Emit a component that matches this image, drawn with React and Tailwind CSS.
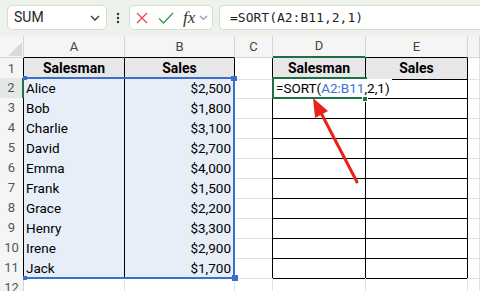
const people = [
  ["Alice", "$2,500"],
  ["Bob", "$1,800"],
  ["Charlie", "$3,100"],
  ["David", "$2,700"],
  ["Emma", "$4,000"],
  ["Frank", "$1,500"],
  ["Grace", "$2,200"],
  ["Henry", "$3,300"],
  ["Irene", "$2,900"],
  ["Jack", "$1,700"],
];

const cols = "grid grid-cols-[24px_101px_110px_38px_93px_102px_1fr]";

function Toolbar() {
  return (
    <div className="flex h-[36px] items-start bg-[#edf2ea] pt-[5px]">
      <div className="ml-[7px] flex h-[25px] w-[100px] items-center justify-between rounded-[5px] border border-[#d8dcd5] bg-white pl-[6px] pr-[6px]">
        <span className="text-[14px] text-[#1f1f1f]">SUM</span>
        <svg width="10" height="6" viewBox="0 0 10 6">
          <path d="M1 1l4 4l4-4" fill="none" stroke="#333" strokeWidth="1.3" />
        </svg>
      </div>
      <div className="flex w-[22px] justify-center pt-[7px]">
        <svg width="4" height="12" viewBox="0 0 4 12">
          <circle cx="2" cy="2" r="1.2" fill="#333" />
          <circle cx="2" cy="6" r="1.2" fill="#333" />
          <circle cx="2" cy="10" r="1.2" fill="#333" />
        </svg>
      </div>
      <div className="flex h-[25px] w-[84px] items-center rounded-[5px] border border-[#d8dcd5] bg-white pl-[6px]">
        <svg width="12" height="12" viewBox="0 0 12 12">
          <path d="M1 1l10 10M11 1L1 11" stroke="#e5484d" strokeWidth="1.3" />
        </svg>
        <svg className="ml-[10px]" width="16" height="12" viewBox="0 0 16 12">
          <path d="M1 6.5l4.5 4.5L15 1" fill="none" stroke="#2e9e49" strokeWidth="1.3" />
        </svg>
        <span className="ml-[9px] font-['Liberation_Serif',serif] text-[17px] italic leading-none text-[#333]">fx</span>
        <svg className="ml-[4px]" width="9" height="6" viewBox="0 0 9 6">
          <path d="M1 1l3.5 3.5L8 1" fill="none" stroke="#999" strokeWidth="1.2" />
        </svg>
      </div>
      <div className="ml-[6px] flex h-[25px] flex-1 items-center rounded-l-[5px] border border-r-0 border-[#d8dcd5] bg-white pl-[10px] font-['DejaVu_Sans_Mono',monospace] text-[13px] text-[#1f1f1f]">
        =SORT(A2:B11,2,1)
      </div>
    </div>
  );
}

function ColumnHeaders() {
  const base = "flex items-center justify-center border-r border-[#d4d4d4] bg-[#f5f5f5] text-[13px] text-[#444]";
  return (
    <div className={`${cols} h-[22px]`}>
      <div className="relative border-r border-b border-[#d4d4d4] bg-[#f5f5f5]">
        <svg className="absolute left-[8px] top-[6px]" width="14" height="14" viewBox="0 0 14 14">
          <path d="M14 0V14H0Z" fill="#d9d9d9" />
        </svg>
      </div>
      <div className={`${base} border-b border-b-black`}>A</div>
      <div className={`${base} border-b border-b-black`}>B</div>
      <div className={`${base} border-b border-b-[#d4d4d4]`}>C</div>
      <div className={`${base} border-b-2 border-b-[#1e7145] bg-[#e4e9e5] text-[#1e6b3e]`}>D</div>
      <div className={`${base} border-b border-b-black`}>E</div>
      <div className={`${base} border-b border-b-[#d4d4d4]`}></div>
    </div>
  );
}

function Row({ n, person }) {
  const inTable = n <= 11;
  const head = n === 1;
  const sel = n >= 2 && n <= 11;
  const rowHead =
    n === 2
      ? "border-r-2 border-r-[#1e7145] bg-[#e4e9e5]"
      : inTable
      ? "border-r border-r-black bg-[#f5f5f5]"
      : "border-r border-r-[#d4d4d4] bg-[#f5f5f5]";
  const tbl = inTable ? "border-r border-b border-black" : "border-r border-b border-[#e1e1e1]";
  const hdr = "justify-center bg-[#e7e7e7] text-[14px] font-bold";
  const selBg = sel ? "bg-[#e8eef8]" : "";
  return (
    <div className={`${cols} h-[20px] text-[13.5px] text-black`}>
      <div className={`flex items-center justify-center border-b border-b-[#d4d4d4] text-[13px] text-[#555] ${rowHead}`}>
        {n}
      </div>
      <div className={`flex items-center ${tbl} ${head ? hdr : "pl-[2px]"} ${selBg}`}>
        {head ? "Salesman" : person ? person[0] : ""}
      </div>
      <div className={`flex items-center ${tbl} ${head ? hdr : "justify-end pr-[3px]"} ${selBg}`}>
        {head ? "Sales" : person ? person[1] : ""}
      </div>
      <div className={`border-b border-[#e1e1e1] ${inTable ? "border-r border-r-black" : "border-r"}`}></div>
      <div className={`flex items-center ${tbl} ${head ? hdr : ""}`}>{head ? "Salesman" : ""}</div>
      <div className={`flex items-center ${tbl} ${head ? hdr : ""}`}>{head ? "Sales" : ""}</div>
      <div className="border-r border-b border-[#e1e1e1]"></div>
    </div>
  );
}

export default function App() {
  const rows = Array.from({ length: 12 }, (_, i) => i + 1);
  return (
    <div className="relative h-[291px] w-[480px] overflow-hidden bg-white font-['Roboto',sans-serif]">
      <Toolbar />
      <ColumnHeaders />
      {rows.map((n) => (
        <Row key={n} n={n} person={n >= 2 ? people[n - 2] : null} />
      ))}

      {/* selected range A2:B11 */}
      <div className="absolute left-[24px] top-[77px] h-[202px] w-[211px] border-2 border-l-0 border-[#3a6fd0]"></div>
      <div className="absolute left-[23px] top-[76px] h-[4px] w-[4px] bg-[#3a6fd0]"></div>
      <div className="absolute left-[231px] top-[76px] h-[5px] w-[6px] bg-[#3a6fd0]"></div>
      <div className="absolute left-[23px] top-[276px] h-[4px] w-[4px] bg-[#3a6fd0]"></div>
      <div className="absolute left-[232px] top-[275px] h-[6px] w-[6px] bg-[#3a6fd0]"></div>

      {/* active cell D2 */}
      <div className="absolute left-[272px] top-[77px] h-[22px] w-[95px] border-2 border-[#1e7145]"></div>
      <div className="absolute left-[274px] top-[79px] flex h-[18px] items-center whitespace-nowrap bg-white pl-[2px] pr-[2px] text-[13.5px] text-black">
        =SORT(<span className="text-[#3b74d6]">A2:B11</span>,2,1)
      </div>
      <div className="absolute left-[362px] top-[96px] h-[6px] w-[6px] border border-white bg-[#1e7145]"></div>

      <svg className="pointer-events-none absolute left-0 top-0" width="480" height="291" viewBox="0 0 480 291">
        <path d="M357 182L320 111" stroke="#e8231b" strokeWidth="3" strokeLinecap="round" />
        <path d="M313 98L328 111L315 118Z" fill="#e8231b" />
      </svg>
    </div>
  );
}
